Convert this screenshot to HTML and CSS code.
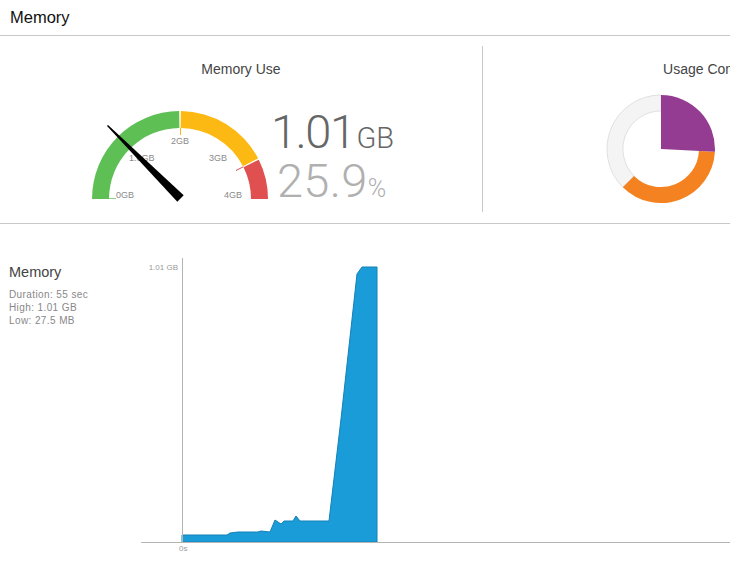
FILE: index.html
```html
<!DOCTYPE html>
<html>
<head>
    <title>
        Memory
    </title>
    <link rel="stylesheet" href="styles.css">
</head>

<body>
    <div class="header">
        <h1 class="header-title">Memory</h1>
    </div>

    <div class="top-panel">
        <!-- Gauge -->
        <div class="panel panel-left">
            <div class="panel-title">Memory Use</div>
            <div class="gauge-row">
                <svg class="gauge" width="184" height="100" viewBox="0 0 184 100">
                    <path d="M4 94 A88 88 0 0 1 91.2 6 L91.4 23 A71 71 0 0 0 21 94 Z" fill="#5dbf54"/>
                    <path d="M92.8 6 A88 88 0 0 1 170.1 53.4 L155 61.2 A71 71 0 0 0 92.6 23 Z" fill="#fdb913"/>
                    <path d="M170.8 54.7 A88 88 0 0 1 180 94 L163 94 A71 71 0 0 0 155.5 62.3 Z" fill="#e05050"/>
                    <line x1="21" y1="93.5" x2="28" y2="93.5" stroke="#8fd38a" stroke-width="1"/>
                    <line x1="92.5" y1="23" x2="92.5" y2="30" stroke="#fdb913" stroke-width="1"/>
                    <line x1="155.3" y1="61.8" x2="148" y2="65.5" stroke="#e05050" stroke-width="1"/>
                    <text class="tick" x="28" y="93">0GB</text>
                    <text class="tick" x="41" y="56">1.0GB</text>
                    <text class="tick" x="83" y="39">2GB</text>
                    <text class="tick" x="121" y="56">3GB</text>
                    <text class="tick" x="136" y="93">4GB</text>
                    <polygon points="20,20 95.7,90.3 89.3,96.7 19,21" fill="#000"/>
                </svg>
                <div class="values">
                    <div class="value-main">1.01<span class="unit-main">GB</span></div>
                    <div class="value-pct">25.9<span class="unit-pct">%</span></div>
                </div>
            </div>
        </div>

        <!-- Donut -->
        <div class="panel panel-right">
            <div class="panel-title">Usage Comparison</div>
            <div class="donut-row">
                <svg class="donut" width="110" height="110" viewBox="0 0 110 110">
                    <path d="M16.8 93.2 A54 54 0 0 1 55 1 L55 17 A38 38 0 0 0 28.1 81.9 Z" fill="#f4f4f4" stroke="#d9d9d9" stroke-width="0.8"/>
                    <path d="M108.9 57.8 A54 54 0 0 1 16.8 93.2 L28.1 81.9 A38 38 0 0 0 92.95 57 Z" fill="#f58220"/>
                    <path d="M55 55 L55 1 A54 54 0 0 1 108.9 57.8 Z" fill="#933c91"/>
                </svg>
            </div>
        </div>
    </div>

    <div class="bottom-panel">
        <div class="sidebar">
            <div class="sidebar-title">Memory</div>
            <div class="stat">Duration: 55 sec</div>
            <div class="stat">High: 1.01 GB</div>
            <div class="stat">Low: 27.5 MB</div>
        </div>
        <div class="chart-div">
            <svg class="chart" width="589" height="305" viewBox="0 0 589 305">
                <polygon points="41,288 41,281 86,281 89,279 97,278 117,278 120,277 129,278 134,266 140,270 143,267 152,267 155,262 159,267 188,267 200,165 216,20 221,13 236,13 236,288" fill="#1a9cd8" stroke="#1380b6" stroke-width="1"/>
                <line x1="41.5" y1="4" x2="41.5" y2="288" stroke="#b4b4b4" stroke-width="1"/>
                <line x1="0" y1="288.5" x2="589" y2="288.5" stroke="#b4b4b4" stroke-width="1"/>
                <text class="axis" x="37" y="16" text-anchor="end">1.01 GB</text>
                <text class="axis" x="38" y="297">0s</text>
            </svg>
        </div>
    </div>
</body>

</html>
```

FILE: styles.css
```css
body{
    margin: 0;
    padding: 0;
    width: 730px;
    height: 569px;
    overflow: hidden;
    font-family: "Liberation Sans", Arial, sans-serif;
    background-color: white;
}
.header{
    height: 35px;
    border-bottom: 1px solid #c8c8c8;
    display: flex;
    align-items: center;
    padding-left: 10px;
}
.header-title{
    margin: 0;
    font-size: 16.5px;
    font-weight: normal;
    color: #111;
}
.top-panel{
    display: flex;
    flex-direction: row;
    padding: 10px 0 11px 0;
    border-bottom: 1px solid #c8c8c8;
}
.panel{
    height: 166px;
    flex-shrink: 0;
    display: flex;
    flex-direction: column;
}
.panel-left{
    width: 482px;
    border-right: 1px solid #c8c8c8;
}
.panel-right{
    width: 480px;
}
.panel-title{
    margin-top: 15px;
    font-size: 14px;
    line-height: 17px;
    color: #444;
    text-align: center;
}
.gauge-row{
    display: flex;
    flex-direction: row;
    margin-top: 27px;
    margin-left: 88px;
}
.gauge{
    display: block;
}
.tick{
    font-family: "Liberation Sans", Arial, sans-serif;
    font-size: 9px;
    fill: #8a8a8a;
}
.values{
    display: flex;
    flex-direction: column;
    padding-top: 5px;
    margin-left: -1px;
}
.value-main{
    font-family: Roboto, sans-serif;
    font-weight: 300;
    font-size: 47px;
    line-height: 44px;
    letter-spacing: -1.5px;
    color: #666;
}
.unit-main{
    font-size: 29px;
    letter-spacing: 0;
    margin-left: 2px;
}
.value-pct{
    padding-left: 6px;
    font-family: Roboto, sans-serif;
    font-weight: 300;
    font-size: 47px;
    line-height: 42px;
    letter-spacing: 0.3px;
    color: #b0b0b0;
}
.unit-pct{
    font-size: 25px;
}
.donut-row{
    display: flex;
    padding-left: 123px;
    margin-top: 16px;
}
.donut{
    display: block;
}
.bottom-panel{
    display: flex;
    flex-direction: row;
}
.sidebar{
    width: 132px;
    padding-left: 9px;
    padding-top: 40px;
    flex-shrink: 0;
}
.sidebar-title{
    font-size: 14.5px;
    line-height: 17px;
    color: #444;
    margin-bottom: 7px;
}
.stat{
    font-size: 10px;
    line-height: 13px;
    letter-spacing: 0.4px;
    color: #888;
}
.chart-div{
    padding-top: 30px;
}
.chart{
    display: block;
}
.axis{
    font-family: "Liberation Sans", Arial, sans-serif;
    font-size: 8px;
    fill: #9a9a9a;
}
```
